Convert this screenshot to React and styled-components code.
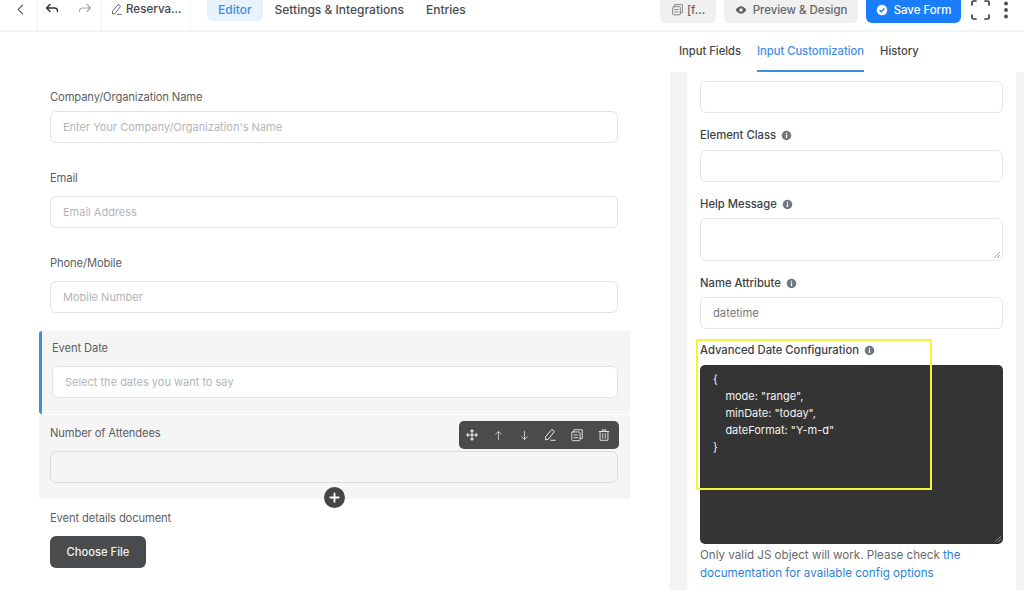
import React from "react";
import styled, { createGlobalStyle } from "styled-components";

const Global = createGlobalStyle`
  html, body { margin: 0; padding: 0; height: 590px; overflow: hidden; background: #fff; }
  body { font-family: Inter, "Liberation Sans", sans-serif; color: #444; -webkit-font-smoothing: antialiased; }
  * { box-sizing: border-box; }
`;

const Page = styled.div`
  position: relative;
  width: 1024px;
  height: 590px;
  overflow: hidden;
  display: flex;
  flex-direction: column;
`;

const TopBar = styled.header`
  height: 32px;
  flex: none;
  display: flex;
  border-bottom: 2px solid #f3f4f5;
  font-size: 12px;
  font-weight: 500;
`;

const BarCell = styled.div`
  width: ${(p) => p.$w}px;
  height: 30px;
  flex: none;
  display: flex;
  gap: ${(p) => p.$gap || 0}px;
  padding: 0 0 12px ${(p) => p.$pad || 0}px;
  align-items: center;
  font-size: 11.6px;
  border-right: 1px solid #f1f2f3;
  color: #444;
`;

const Tabs = styled.nav`
  display: flex;
  margin-left: 16px;
  align-items: flex-start;
  gap: 12px;
`;

const TopTab = styled.div`
  height: 21px;
  padding: 0 ${(p) => (p.$active ? 11 : 0)}px;
  margin-right: ${(p) => p.$mr || 0}px;
  border-radius: 0 0 5px 5px;
  background: ${(p) => (p.$active ? "#e8f2fd" : "transparent")};
  color: ${(p) => (p.$active ? "#3f8de4" : "#4a4c50")};
  line-height: 19px;
`;

const BarRight = styled.div`
  margin-left: auto;
  display: flex;
  align-items: flex-start;
  gap: 8px;
  padding-right: 16px;
`;

const BarButton = styled.div`
  width: ${(p) => p.$w}px;
  height: 23px;
  padding-bottom: 4px;
  border-radius: 0 0 6px 6px;
  background: ${(p) => (p.$primary ? "#1a7efb" : "#f0f0f1")};
  color: ${(p) => (p.$primary ? "#fff" : "#62666b")};
  font-size: 11.4px;
  display: flex;
  align-items: center;
  justify-content: center;
  gap: ${(p) => p.$gap || 6}px;
`;

const IconPlain = styled.div`
  height: 19px;
  margin-left: ${(p) => p.$ml || 0}px;
  display: flex;
  align-items: center;
`;

const Body = styled.div`
  flex: 1;
  min-height: 0;
  display: flex;
`;

const Editor = styled.main`
  width: 670px;
  flex: none;
  padding: 57px 0 0 39px;
  display: flex;
  flex-direction: column;
`;

const Field = styled.div`
  width: 579px;
  padding-left: 11px;
  margin-bottom: ${(p) => p.$mb}px;
`;

const FieldLabel = styled.div`
  height: 14px;
  font-size: 11.2px;
  letter-spacing: -0.12px;
  line-height: 16px;
  color: #5c5f63;
  margin-bottom: ${(p) => p.$mb}px;
`;

const TextBox = styled.div`
  width: ${(p) => p.$w || 568}px;
  height: 32px;
  border: 1px solid ${(p) => (p.$dim ? "#dcdcdc" : "#e2e3e5")};
  border-radius: 6px;
  background: ${(p) => (p.$dim ? "transparent" : "#fff")};
  padding-left: 12px;
  font-size: 11px;
  line-height: 31px;
  color: #b3b5b8;
`;

const ActiveBlock = styled.section`
  width: 591px;
  height: 83px;
  padding: 9px 12px 0 10px;
  background: #f5f5f5;
  border-left: 3px solid #3c8fe3;
  border-radius: 3px 0 0 3px;
`;

const HoverBlock = styled.section`
  position: relative;
  width: 591px;
  height: 84px;
  margin-top: 1px;
  padding: 10px 12px 0 11px;
  background: #f5f5f5;
`;

const Toolbar = styled.div`
  position: absolute;
  top: 6px;
  left: 420px;
  width: 160px;
  height: 28px;
  border-radius: 5px;
  background: #4a4b4c;
  display: flex;
  align-items: center;
  justify-content: space-around;
  padding-right: 2px;
  color: #e6e6e6;
`;

const AddButton = styled.div`
  position: absolute;
  left: 285px;
  top: 72px;
  width: 21px;
  height: 21px;
  border-radius: 50%;
  background: #444546;
  display: flex;
  align-items: center;
  justify-content: center;
`;

const UploadField = styled.div`
  padding: 11px 0 0 11px;
`;

const ChooseFile = styled.div`
  width: 96px;
  height: 32px;
  margin-top: 12px;
  background: #4a4b4c;
  color: #f2f2f2;
  border-radius: 6px;
  font-size: 11.2px;
  font-weight: 500;
  line-height: 32px;
  text-align: center;
`;

const Side = styled.aside`
  width: 354px;
  flex: none;
  display: flex;
  flex-direction: column;
`;

const SideTabs = styled.nav`
  height: 40px;
  flex: none;
  display: flex;
  gap: 16px;
  padding-left: 9px;
  font-size: 11.2px;
  font-weight: 500;
`;

const SideTab = styled.div`
  height: 40px;
  line-height: 39px;
  color: ${(p) => (p.$active ? "#3f8de4" : "#44464a")};
  border-bottom: 2px solid ${(p) => (p.$active ? "#3f8de4" : "transparent")};
`;

const SideTrack = styled.div`
  flex: 1;
  background: #f3f3f3;
  padding: 0 8px 0 17px;
`;

const SideScroll = styled.div`
  height: 100%;
  background: #fff;
  padding: 9px 13px 0 13px;
`;

const SideLabel = styled.div`
  height: 14px;
  margin: ${(p) => p.$mt}px 0 ${(p) => p.$mb}px;
  font-size: 11.25px;
  font-weight: 500;
  line-height: 14px;
  color: #3d3f43;
  display: flex;
  align-items: center;
  gap: 5px;
`;

const SideInput = styled.div`
  height: ${(p) => p.$h || 32}px;
  border: 1px solid #e4e5e7;
  border-radius: 6px;
  padding-left: 12px;
  font-size: 11.2px;
  line-height: 31px;
  color: #75787c;
  position: relative;
`;

const Grip = styled.svg`
  position: absolute;
  right: 1px;
  bottom: 1px;
`;

const CodeBox = styled.pre`
  position: relative;
  margin: 0;
  height: 179px;
  border-radius: 5px;
  background: #353435;
  padding: 6px 0 0 13px;
  color: #f2f2f2;
  font-family: Inter, "Liberation Sans", sans-serif;
  font-size: 11px;
  line-height: 17px;
`;

const Hint = styled.p`
  margin: 2px 0 0;
  font-size: 11.6px;
  line-height: 18.3px;
  color: #66696d;
`;

const HintLink = styled.span`
  color: #2f7fd6;
`;

const Highlight = styled.div`
  position: absolute;
  left: 696px;
  top: 339px;
  width: 236px;
  height: 151px;
  border: 2px solid #f4f43a;
  pointer-events: none;
`;

const Stroke = ({ size = 14, color = "currentColor", w = 1.4, children }) => (
  <svg width={size} height={size} viewBox="0 0 16 16" fill="none" stroke={color} strokeWidth={w} strokeLinecap="round" strokeLinejoin="round">
    {children}
  </svg>
);

const Pencil = ({ size, color }) => (
  <Stroke size={size} color={color} w={1.1}>
    <path d="M10.5 2 13 4 6 13 3 13.5 3 10.5Z" />
    <path d="M9 14h5" />
  </Stroke>
);

const Copy = ({ size, color }) => (
  <Stroke size={size} color={color} w={1.1}>
    <rect x="2" y="4.5" width="9.5" height="10" rx="1" />
    <path d="M4.5 4.5V2h9.5v10h-2.5M4.5 8h4.5M4.5 11h4.5" />
  </Stroke>
);

const Info = () => (
  <svg width="11" height="11" viewBox="0 0 12 12">
    <circle cx="6" cy="6" r="5.2" fill="#6f7680" />
    <rect x="5.3" y="5" width="1.4" height="3.8" fill="#fff" />
    <rect x="5.3" y="3" width="1.4" height="1.3" fill="#fff" />
  </svg>
);

const toolIcons = [
  <Stroke key="m" color="#f0f0f0" w={1.2}><path d="M8 2v12M2 8h12M6.5 3.5 8 2l1.5 1.5M6.5 12.5 8 14l1.5-1.5M3.5 6.5 2 8l1.5 1.5M12.5 6.5 14 8l-1.5 1.5" /></Stroke>,
  <Stroke key="u" color="#c9c9c9" w={1.1} size={13}><path d="M8 13V3M4.5 6.5 8 3l3.5 3.5" /></Stroke>,
  <Stroke key="d" color="#e0e0e0" w={1.1} size={13}><path d="M8 3v10M4.5 9.5 8 13l3.5-3.5" /></Stroke>,
  <Pencil key="p" color="#f0f0f0" />,
  <Copy key="c" color="#dddddd" />,
  <Stroke key="t" color="#e6e6e6" w={1.1}><path d="M2.5 4h11M6 4V2.2h4V4M3.5 4v10h9V4M6.5 6.5v5M9.5 6.5v5" /></Stroke>,
];

export default function App() {
  return (
    <Page>
      <Global />
      <TopBar>
        <BarCell $w={38} $pad={14}>
          <Stroke size={13} color="#3c3e42" w={1.3}><path d="M10.5 2.5 5 8l5.5 5.5" /></Stroke>
        </BarCell>
        <BarCell $w={64} $pad={6} $gap={17}>
          <Stroke size={16} color="#2f3135" w={1.4}><path d="M6 3.5 2.5 7 6 10.5M2.5 7H10.5c2 0 3 1.2 3 3.5" /></Stroke>
          <Stroke size={16} color="#a3a5a8" w={1.1}><path d="M10 3.5 13.5 7 10 10.5M13.5 7H5.5c-2 0-3 1.2-3 3.5" /></Stroke>
        </BarCell>
        <BarCell $w={89} $pad={8} $gap={3}>
          <Pencil size={13} color="#55575a" />
          <span>Reserva...</span>
        </BarCell>
        <Tabs>
          <TopTab $active>Editor</TopTab>
          <TopTab $mr={10}>Settings &amp; Integrations</TopTab>
          <TopTab>Entries</TopTab>
        </Tabs>
        <BarRight>
          <BarButton $w={56} $gap={3}>
            <Copy size={13} color="#7a7d82" />
            <span>[f...</span>
          </BarButton>
          <BarButton $w={134}>
            <svg width="12" height="12" viewBox="0 0 16 16"><path d="M1 8c2-3.5 4.5-5 7-5s5 1.5 7 5c-2 3.5-4.5 5-7 5s-5-1.5-7-5Z" fill="#5f6368" /><circle cx="8" cy="8" r="2.2" fill="#f0f0f1" /></svg>
            <span>Preview &amp; Design</span>
          </BarButton>
          <BarButton $w={95} $primary>
            <svg width="12" height="12" viewBox="0 0 16 16"><circle cx="8" cy="8" r="7" fill="#fff" /><path d="M4.8 8.2 7 10.3 11.2 5.9" fill="none" stroke="#1a7efb" strokeWidth="1.8" /></svg>
            <span>Save Form</span>
          </BarButton>
          <IconPlain $ml={2}>
            <svg width="19" height="20" viewBox="0 0 19 20" fill="none" stroke="#3a3c40" strokeWidth="1.7" strokeLinecap="round"><path d="M1 5V2.5Q1 1 2.5 1H5M14 1h2.5Q18 1 18 2.5V5M1 15v2.5Q1 19 2.5 19H5M14 19h2.5q1.5 0 1.5-1.5V15" /></svg>
          </IconPlain>
          <IconPlain $ml={6}>
            <svg width="4" height="18" viewBox="0 0 4 18" fill="#4a4c50"><circle cx="2" cy="2.5" r="1.9" /><circle cx="2" cy="9" r="1.9" /><circle cx="2" cy="15.5" r="1.9" /></svg>
          </IconPlain>
        </BarRight>
      </TopBar>
      <Body>
        <Editor>
          <Field $mb={27}>
            <FieldLabel $mb={8}>Company/Organization Name</FieldLabel>
            <TextBox>Enter Your Company/Organization's Name</TextBox>
          </Field>
          <Field $mb={27}>
            <FieldLabel $mb={12}>Email</FieldLabel>
            <TextBox>Email Address</TextBox>
          </Field>
          <Field $mb={18}>
            <FieldLabel $mb={12}>Phone/Mobile</FieldLabel>
            <TextBox>Mobile Number</TextBox>
          </Field>
          <ActiveBlock>
            <FieldLabel $mb={12}>Event Date</FieldLabel>
            <TextBox $w={566}>Select the dates you want to say</TextBox>
          </ActiveBlock>
          <HoverBlock>
            <FieldLabel $mb={12}>Number of Attendees</FieldLabel>
            <TextBox $dim />
            <Toolbar>{toolIcons}</Toolbar>
            <AddButton>
              <svg width="11" height="11" viewBox="0 0 12 12" stroke="#fff" strokeWidth="2" strokeLinecap="round"><path d="M6 1.5v9M1.5 6h9" /></svg>
            </AddButton>
          </HoverBlock>
          <UploadField>
            <FieldLabel $mb={0}>Event details document</FieldLabel>
            <ChooseFile>Choose File</ChooseFile>
          </UploadField>
        </Editor>
        <Side>
          <SideTabs>
            <SideTab>Input Fields</SideTab>
            <SideTab $active>Input Customization</SideTab>
            <SideTab>History</SideTab>
          </SideTabs>
          <SideTrack>
            <SideScroll>
              <SideInput />
              <SideLabel $mt={15} $mb={8}>Element Class <Info /></SideLabel>
              <SideInput />
              <SideLabel $mt={15} $mb={7}>Help Message <Info /></SideLabel>
              <SideInput $h={43}>
                <Grip width="8" height="8" viewBox="0 0 8 8" stroke="#8c8c8c" strokeWidth="0.8"><path d="M1 7 7 1M4 7l3-3" /></Grip>
              </SideInput>
              <SideLabel $mt={15} $mb={7}>Name Attribute <Info /></SideLabel>
              <SideInput>datetime</SideInput>
              <SideLabel $mt={14} $mb={8}>Advanced Date Configuration <Info /></SideLabel>
              <CodeBox>
                {`{\n    mode: "range",\n    minDate: "today",\n    dateFormat: "Y-m-d"\n}`}
                <Grip width="8" height="8" viewBox="0 0 8 8" stroke="#9a9a9a" strokeWidth="0.8"><path d="M1 7 7 1M4 7l3-3" /></Grip>
              </CodeBox>
              <Hint>
                Only valid JS object will work. Please check <HintLink>the</HintLink> <HintLink>documentation for available config options</HintLink>
              </Hint>
            </SideScroll>
          </SideTrack>
        </Side>
      </Body>
      <Highlight />
    </Page>
  );
}
